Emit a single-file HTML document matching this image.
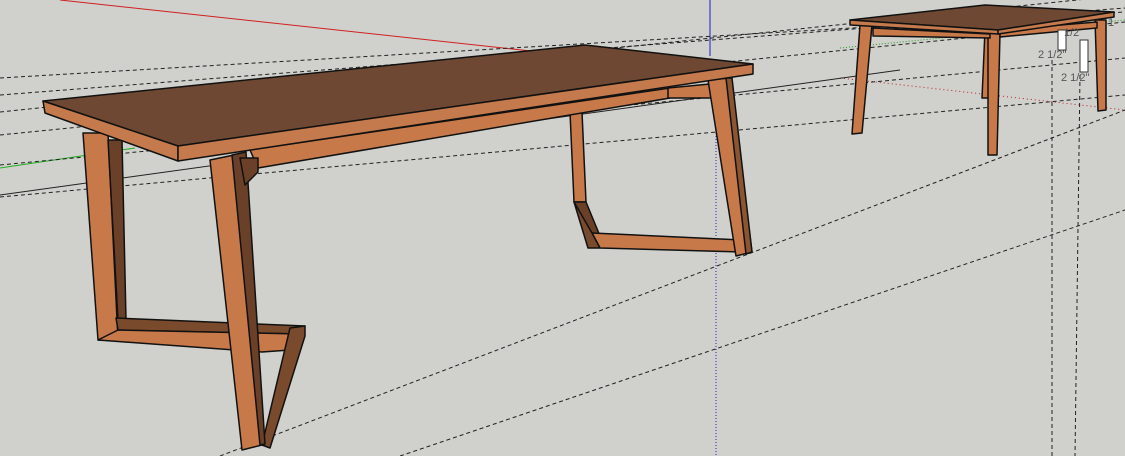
<!DOCTYPE html>
<html><head><style>
html,body{margin:0;padding:0;background:#d0d0cc;}
svg{display:block}
text{font-family:"Liberation Sans",sans-serif;font-size:11px;fill:#555}
</style></head><body>
<svg width="1125" height="456" viewBox="0 0 1125 456" xmlns="http://www.w3.org/2000/svg">
<rect width="1125" height="456" fill="#d0d0cc"/>
<!-- guide lines -->
<line x1="60" y1="0" x2="540" y2="52" stroke="#d02020" stroke-width="1"/>
<line x1="710" y1="0" x2="710" y2="56" stroke="#2020c0" stroke-width="1"/>
<line x1="716" y1="130" x2="716" y2="456" stroke="#2020c0" stroke-width="1" stroke-dasharray="1,2"/>
<line x1="0" y1="168" x2="135" y2="148" stroke="#20b020" stroke-width="1"/>
<line x1="840" y1="48" x2="1125" y2="20" stroke="#20a020" stroke-width="1" stroke-dasharray="1,2"/>
<line x1="840" y1="78" x2="1125" y2="110" stroke="#c02020" stroke-width="1" stroke-dasharray="1,3"/>
<g stroke="#222" stroke-width="1" fill="none" stroke-dasharray="4,3">
<line x1="0" y1="112" x2="1125" y2="-5"/>
<line x1="0" y1="135" x2="1125" y2="22"/>
<line x1="0" y1="165" x2="1125" y2="58"/>
<line x1="0" y1="197" x2="1125" y2="95"/>
<line x1="0" y1="95" x2="1125" y2="8"/>
<line x1="0" y1="78" x2="1125" y2="12"/>
<line x1="220" y1="456" x2="1125" y2="110"/>
<line x1="400" y1="456" x2="1125" y2="210"/>
<line x1="1052" y1="60" x2="1052" y2="456"/>
<line x1="1080" y1="75" x2="1075" y2="456"/>
</g>
<line x1="0" y1="195" x2="900" y2="70" stroke="#222" stroke-width="1"/>
<g stroke="#111" stroke-width="1.5" stroke-linejoin="round">
<!-- left back leg -->
<polygon points="83,133 108,133 118,340 98,340" fill="#c8794a"/>
<polygon points="108,140 122,140 126,320 118,320" fill="#6a4128"/>
<!-- bottom rail left -->
<polygon points="116,318 305,326 300,334 118,330" fill="#7a4a2c"/>
<polygon points="98,340 118,330 300,334 290,350 262,352" fill="#c8794a"/>
<!-- diagonal rail -->
<polygon points="290,328 305,326 305,336 270,448 262,445" fill="#7a4a2c"/>
<!-- diagonal front leg -->
<polygon points="210,160 234,155 262,445 242,450" fill="#c8794a"/>
<polygon points="232,155 246,152 265,444 260,445" fill="#6a4128"/>
<!-- right back leg -->
<polygon points="570,112 582,112 586,202 574,202" fill="#c8794a"/>
<polygon points="574,202 586,202 600,236 592,245" fill="#6a4128"/>
<polygon points="592,233 742,240 742,252 600,248" fill="#c8794a"/>
<polygon points="574,202 592,233 600,248 588,248" fill="#7a4a2c"/>
<!-- apron -->
<polygon points="250,150 670,88 670,98 258,168" fill="#c8794a"/>
<polygon points="240,158 258,158 258,172 245,185" fill="#6a4128"/>
<polygon points="668,88 710,84 712,98 688,98 668,98" fill="#c8794a"/>
<!-- right front leg -->
<polygon points="708,80 730,78 752,252 736,256" fill="#c8794a"/>
<polygon points="726,78 732,78 752,252 746,254" fill="#8a5530"/>
<!-- tabletop -->
<polygon points="43,101 585,45 753,64 178,146" fill="#6e4832"/>
<polygon points="43,101 178,146 178,161 45,113" fill="#c47a4c"/>
<polygon points="178,146 753,64 753,74 178,161" fill="#c47a4c"/>
<!-- second table -->
<polygon points="860,25 872,25 862,133 852,134" fill="#c8794a"/>
<polygon points="985,30 993,30 990,98 982,98" fill="#c8794a"/>
<polygon points="1095,20 1106,20 1106,110 1098,111" fill="#c8794a"/>
<polygon points="988,33 1000,33 997,155 988,155" fill="#c8794a"/>
<polygon points="873,28 990,34 990,38 873,36" fill="#c8794a"/>
<polygon points="1000,30 1097,22 1097,28 1000,37" fill="#c8794a"/>
<polygon points="850,20 985,5 1114,12 998,30" fill="#6e4832"/>
<polygon points="850,20 998,30 998,34 850,25" fill="#c47a4c"/>
<polygon points="998,30 1114,12 1114,17 998,34" fill="#c47a4c"/>
</g>
<rect x="1058" y="30" width="8" height="20" fill="#fff" stroke="#333"/>
<rect x="1080" y="40" width="8" height="32" fill="#fff" stroke="#333"/>
<text x="1038" y="58">2 1/2"</text>
<text x="1061" y="81">2 1/2"</text>
<text x="1064" y="36">1/2</text>
<text x="1108" y="26">1</text>
</svg>
</body></html>
